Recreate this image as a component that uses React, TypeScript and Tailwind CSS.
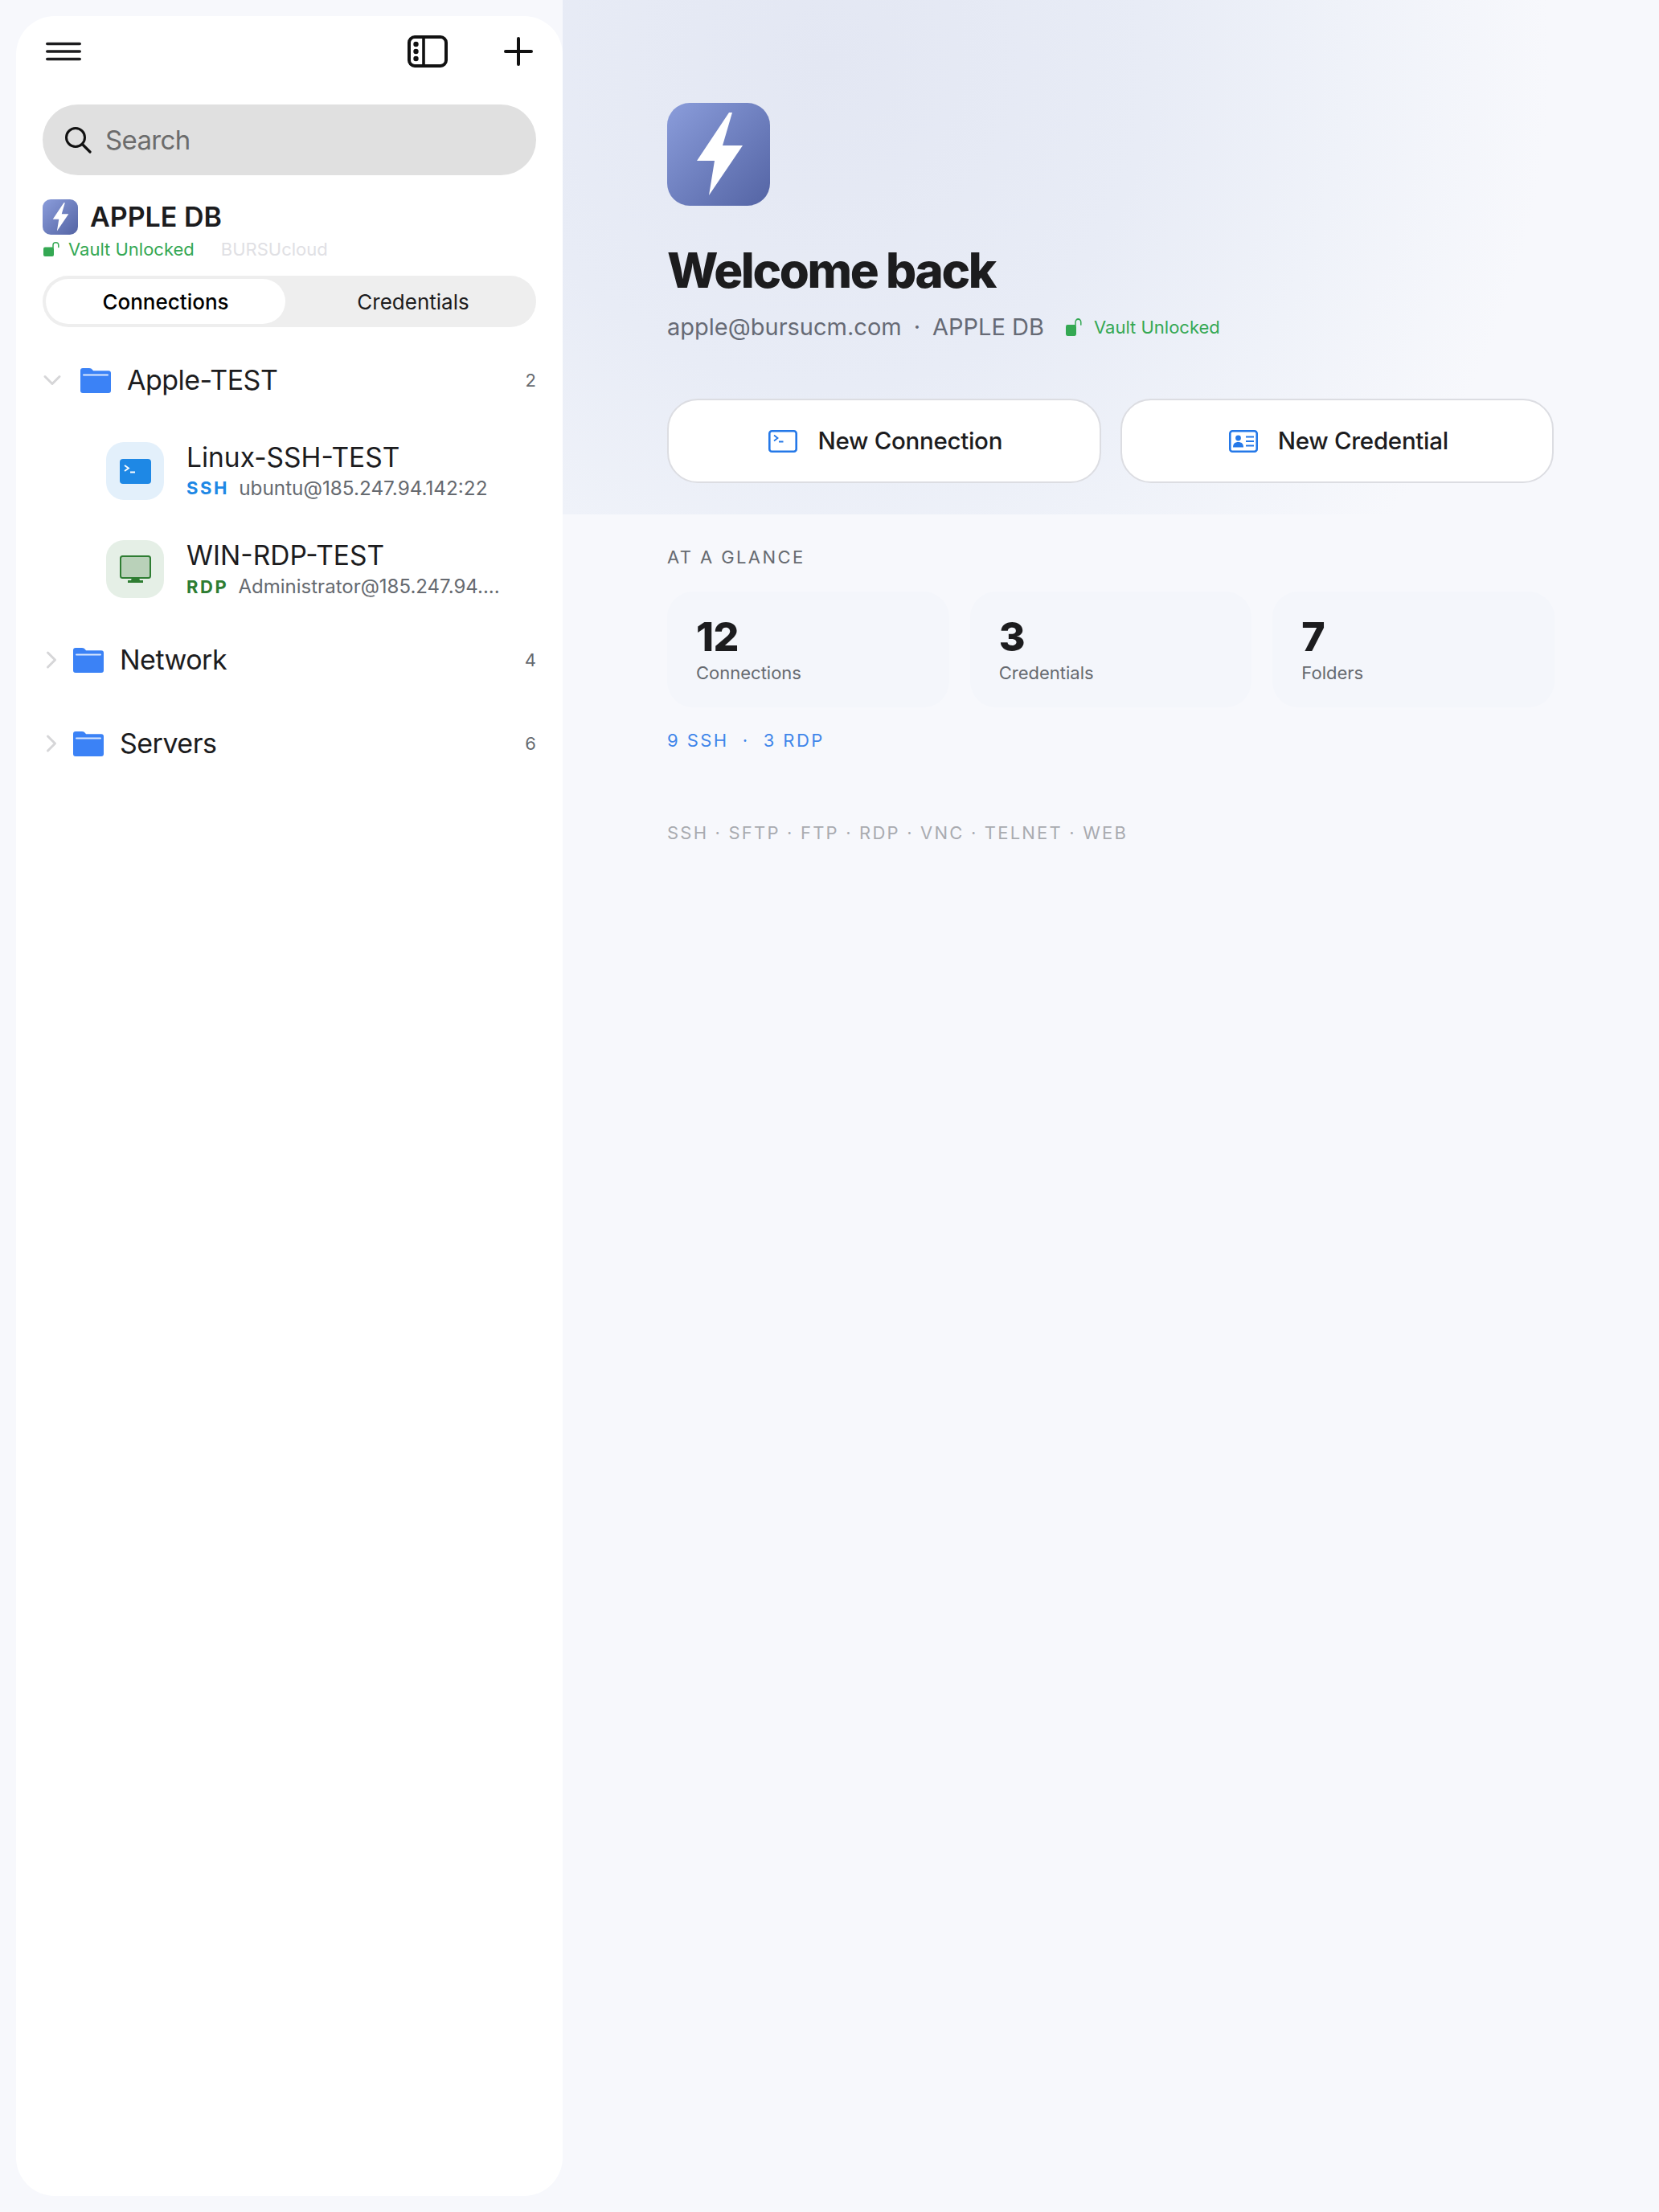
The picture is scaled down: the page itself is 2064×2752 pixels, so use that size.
import React from "react";
import { ChevronDown, ChevronRight } from "lucide-react";

const FONT = "font-['Inter','Liberation_Sans',sans-serif]";

const Bolt = () => (
  <svg viewBox="0 0 128 128" className="w-full h-full">
    <path d="M81 12 L77 12 L37 72 L59 72 L52 115 L94 53 L69 53 Z" fill="#fff" />
  </svg>
);

const Lock = ({ className }: { className: string }) => (
  <svg viewBox="0 0 20 18" preserveAspectRatio="none" className={`shrink-0 ${className}`}>
    <rect x="0" y="6.5" width="13" height="11.5" rx="2" fill="#34a853" />
    <path d="M12 7 V4 a3.4 3.2 0 0 1 6.8 0 V6.5" fill="none" stroke="#34a853" strokeWidth="1.5" strokeLinecap="round" />
  </svg>
);

const Folder = () => (
  <svg viewBox="0 0 38 31" className="w-[38px] h-[31px] shrink-0">
    <path d="M0 3 a3 3 0 0 1 3-3 h8 c2 0 3 .8 4 2 l1 1.2 H35 a3 3 0 0 1 3 3 V28 a3 3 0 0 1-3 3 H3 a3 3 0 0 1-3-3 Z" fill="#3b82f6" />
    <rect x="3" y="7.5" width="32" height="2" rx="1" fill="#dbe8fe" />
  </svg>
);

const TREE_CLOSED = [
  { name: "Network", count: 4, cy: "mt-[57px]" },
  { name: "Servers", count: 6, cy: "mt-[64px]" },
];

const StatCard = ({ value, label }: { value: number; label: string }) => (
  <div className="flex-1 h-[144px] rounded-[32px] bg-[#f4f6fb] pl-[36px] pt-[28px]">
    <div className="text-[50px] leading-[56px] font-extrabold tracking-[-0.01em] text-[#1c1c1e]">{value}</div>
    <div className="text-[22px] leading-[28px] mt-[3px] text-[#666a70]">{label}</div>
  </div>
);

export default function App() {
  return (
    <div className={`${FONT} flex w-[2064px] h-[2752px] bg-[#f7f8fc] text-[#1c1c1e] overflow-hidden`}>
      <aside className="w-[680px] h-[2712px] mt-[20px] ml-[20px] shrink-0 bg-white rounded-[48px] px-[33px]">
        {/* top bar */}
        <div className="flex items-center h-[40px] mt-[24px] pl-[4px]">
          <svg viewBox="0 0 44 24" className="w-[44px] h-[24px]">
            <path d="M1.8 2.5 H42.2 M1.8 12 H42.2 M1.8 21.5 H42.2" stroke="#1c1c1e" strokeWidth="3.6" strokeLinecap="round" />
          </svg>
          <svg viewBox="0 0 50 40" className="w-[50px] h-[40px] ml-[406px]">
            <rect x="2" y="2" width="46" height="36" rx="7" fill="none" stroke="#111" strokeWidth="4" />
            <path d="M20 2 V38" stroke="#111" strokeWidth="3.6" />
            <circle cx="10.5" cy="11" r="3.2" fill="#111" />
            <circle cx="10.5" cy="20" r="3.2" fill="#111" />
            <circle cx="10.5" cy="29" r="3.2" fill="#111" />
          </svg>
          <svg viewBox="0 0 36 36" className="w-[36px] h-[36px] ml-[70px]">
            <path d="M18 2 V34 M2 18 H34" stroke="#111" strokeWidth="4" strokeLinecap="round" />
          </svg>
        </div>

        {/* search */}
        <div className="flex items-center h-[88px] mt-[46px] rounded-[44px] bg-[#e0e0e0] pl-[27px]">
          <svg viewBox="0 0 34 34" className="w-[34px] h-[34px]">
            <circle cx="14" cy="14" r="11.5" fill="none" stroke="#111" strokeWidth="3" />
            <path d="M22.5 22.5 L32 32" stroke="#111" strokeWidth="3.2" strokeLinecap="round" />
          </svg>
          <span className="ml-[17px] text-[33px] leading-none tracking-[-0.02em] text-[#6c6c6c]">Search</span>
        </div>

        {/* vault */}
        <div className="flex items-center mt-[30px]">
          <div className="w-[44px] h-[44px] rounded-[10px] bg-linear-to-br from-[#8b9ddb] to-[#5464a4]">
            <Bolt />
          </div>
          <span className="ml-[15px] text-[34px] leading-none font-semibold">APPLE DB</span>
        </div>
        <div className="flex items-center mt-[4px] text-[22px] leading-[28px]">
          <span className="ml-[1px]"><Lock className="w-[20px] h-[18px]" /></span>
          <span className="ml-[11px] text-[#34a853]">Vault Unlocked</span>
          <span className="ml-[33px] text-[#e0e0e4]">BURSUcloud</span>
        </div>

        {/* segmented control */}
        <div className="flex h-[64px] mt-[19px] rounded-[32px] bg-[#eeeeee] p-[4px] text-[26px]">
          <div className="flex items-center justify-center w-[298px] rounded-[28px] bg-white font-medium text-black">Connections</div>
          <div className="flex items-center justify-center flex-1 pl-[10px] text-[#1c1c1e]">Credentials</div>
        </div>

        {/* tree */}
        <div className="flex items-center h-[40px] mt-[46px]">
          <ChevronDown className="w-[36px] h-[36px] text-[#d6d6d8] -ml-[6px]" strokeWidth={2} />
          <div className="ml-[17px]"><Folder /></div>
          <span className="ml-[20px] text-[34px] leading-none tracking-[-0.015em]">Apple-TEST</span>
          <span className="ml-auto text-[22px] text-[#666a70]">2</span>
        </div>

        <div className="flex items-center h-[72px] mt-[57px] pl-[79px]">
          <div className="flex items-center justify-center w-[72px] h-[72px] rounded-[22px] bg-[#e3f0fb]">
            <svg viewBox="0 0 39 31" className="w-[39px] h-[31px]">
              <rect width="39" height="31" rx="4" fill="#1e88e5" />
              <path d="M6 8 L11 11.5 L6 15 M13 16.5 H19" fill="none" stroke="#fff" strokeWidth="1.8" />
            </svg>
          </div>
          <div className="ml-[28px]">
            <div className="text-[33.5px] leading-[38px]">Linux-SSH-TEST</div>
            <div className="flex items-center mt-[4px] leading-[30px]">
              <span className="text-[22px] font-bold tracking-[0.12em] text-[#1e88e5]">SSH</span>
              <span className="ml-[12px] text-[24.3px] text-[#666a70]">ubuntu@185.247.94.142:22</span>
            </div>
          </div>
        </div>

        <div className="flex items-center h-[72px] mt-[50px] pl-[79px]">
          <div className="flex items-center justify-center w-[72px] h-[72px] rounded-[22px] bg-[#e5efe6]">
            <svg viewBox="0 0 39 34" className="w-[39px] h-[34px]">
              <rect x="1" y="1" width="37" height="27" rx="2.5" fill="#b9d1b9" stroke="#2e7d32" strokeWidth="2" />
              <path d="M15 28 H24 L25 31 H29 V34 H10 V31 H14 Z" fill="#2e7d32" />
            </svg>
          </div>
          <div className="ml-[28px] min-w-0">
            <div className="text-[33.5px] leading-[38px]">WIN-RDP-TEST</div>
            <div className="flex items-center mt-[5px] leading-[30px] whitespace-nowrap">
              <span className="text-[22px] font-bold tracking-[0.12em] text-[#2e7d32]">RDP</span>
              <span className="ml-[12px] text-[24px] text-[#666a70]">Administrator@185.247.94....</span>
            </div>
          </div>
        </div>

        {TREE_CLOSED.map((f) => (
          <div key={f.name} className={`flex items-center h-[40px] ${f.cy}`}>
            <ChevronRight className="w-[36px] h-[36px] text-[#d6d6d8] -ml-[7.5px]" strokeWidth={2} />
            <div className="ml-[9.5px]"><Folder /></div>
            <span className="ml-[20px] text-[34px] leading-none tracking-[-0.015em]">{f.name}</span>
            <span className="ml-auto text-[22px] text-[#666a70]">{f.count}</span>
          </div>
        ))}
      </aside>

      <main className="flex-1 min-w-0">
        <section className="h-[640px] pt-[128px] pl-[130px] pr-[131px] bg-[radial-gradient(circle_900px_at_328px_77px,#e3e7f3_0%,#e8ecf6_45%,#eff2f9_72%,#f7f8fc_100%)]">
          <div className="w-[128px] h-[128px] rounded-[28px] bg-linear-to-br from-[#8b9ddb] to-[#5464a4]">
            <Bolt />
          </div>
          <h1 className="mt-[45px] text-[60px] leading-[70px] font-extrabold tracking-[-0.04em] text-[#1c1c1e]">Welcome back</h1>
          <div className="flex items-center mt-[18px] h-[36px] text-[29px] text-[#666a75]">
            <span>apple@bursucm.com</span>
            <span className="mx-[15px]">·</span>
            <span>APPLE DB</span>
            <span className="ml-[27px]"><Lock className="w-[20px] h-[22px]" /></span>
            <span className="ml-[15px] text-[22px] text-[#34a853]">Vault Unlocked</span>
          </div>
          <div className="flex gap-[24px] mt-[71px]">
            <button className="flex-1 flex items-center justify-center gap-[25px] h-[105px] pl-[4px] rounded-[38px] bg-white border-2 border-[#dcdde2] text-[29.5px] font-medium tracking-[-0.01em] text-[#1c1c1e]">
              <svg viewBox="0 0 36 28" className="w-[36px] h-[28px]">
                <rect x="1.3" y="1.3" width="33.4" height="25.4" rx="3" fill="none" stroke="#2478e8" strokeWidth="2.6" />
                <path d="M7 6.5 L11.5 10 L7 13.5 M13 14.5 H18.5" fill="none" stroke="#2478e8" strokeWidth="1.8" />
              </svg>
              New Connection
            </button>
            <button className="flex-1 flex items-center justify-center gap-[25px] h-[105px] pl-[4px] rounded-[38px] bg-white border-2 border-[#dcdde2] text-[29.5px] font-medium tracking-[-0.01em] text-[#1c1c1e]">
              <svg viewBox="0 0 36 28" className="w-[36px] h-[28px]">
                <rect x="1.3" y="1.3" width="33.4" height="25.4" rx="3" fill="none" stroke="#2478e8" strokeWidth="2.6" />
                <circle cx="11.5" cy="10" r="3.4" fill="#2478e8" />
                <path d="M5 21.5 c0-4.5 2.5-6.5 6.5-6.5 s6.5 2 6.5 6.5 Z" fill="#2478e8" />
                <path d="M21 8.5 H31 M21 14 H31 M21 19.5 H31" stroke="#2478e8" strokeWidth="2" />
              </svg>
              New Credential
            </button>
          </div>
        </section>

        <section className="pl-[130px] pr-[130px]">
          <div className="mt-[39px] text-[22px] leading-[28px] tracking-[0.11em] text-[#666a70]">AT A GLANCE</div>
          <div className="flex gap-[26px] mt-[29px]">
            <StatCard value={12} label="Connections" />
            <StatCard value={3} label="Credentials" />
            <StatCard value={7} label="Folders" />
          </div>
          <div className="mt-[27px] text-[22px] leading-[28px] tracking-[0.11em] text-[#3f86ea] whitespace-pre">9 SSH  ·  3 RDP</div>
          <div className="mt-[87px] text-[22px] leading-[28px] tracking-[0.1em] text-[#a9abb0]">SSH · SFTP · FTP · RDP · VNC · TELNET · WEB</div>
        </section>
      </main>
    </div>
  );
}
